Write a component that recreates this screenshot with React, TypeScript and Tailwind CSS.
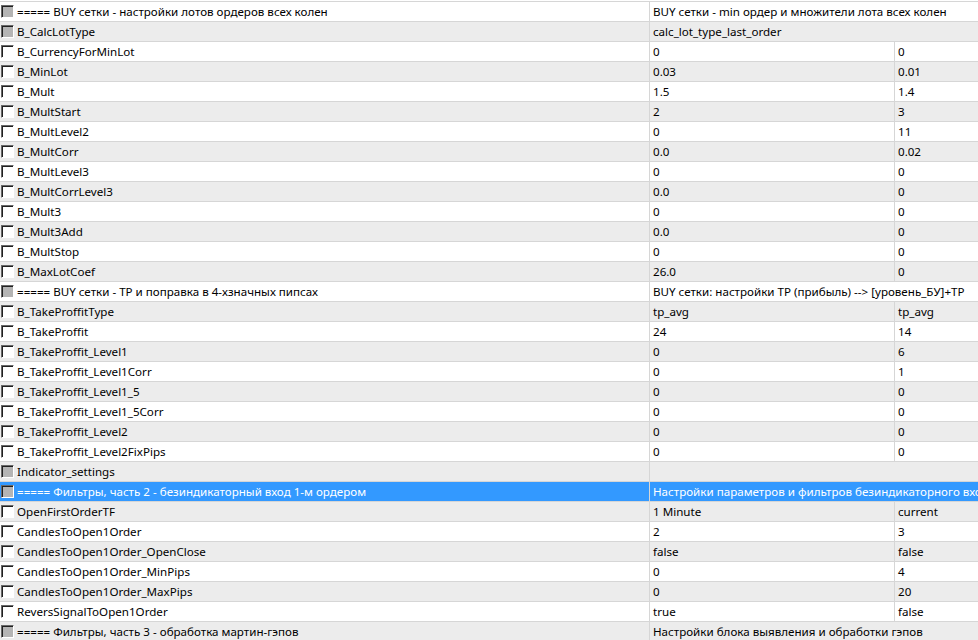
import React from 'react';

type Row = {
  name: string;
  v1?: string;
  v2?: string;
  span?: boolean;
  group?: boolean;
  selected?: boolean;
};

const ROWS: Row[] = [
  { name: '===== BUY сетки - настройки лотов ордеров всех колен', v1: 'BUY сетки - min ордер и множители лота всех колен', span: true, group: true },
  { name: 'B_CalcLotType', v1: 'calc_lot_type_last_order', span: true, group: true },
  { name: 'B_CurrencyForMinLot', v1: '0', v2: '0' },
  { name: 'B_MinLot', v1: '0.03', v2: '0.01' },
  { name: 'B_Mult', v1: '1.5', v2: '1.4' },
  { name: 'B_MultStart', v1: '2', v2: '3' },
  { name: 'B_MultLevel2', v1: '0', v2: '11' },
  { name: 'B_MultCorr', v1: '0.0', v2: '0.02' },
  { name: 'B_MultLevel3', v1: '0', v2: '0' },
  { name: 'B_MultCorrLevel3', v1: '0.0', v2: '0' },
  { name: 'B_Mult3', v1: '0', v2: '0' },
  { name: 'B_Mult3Add', v1: '0.0', v2: '0' },
  { name: 'B_MultStop', v1: '0', v2: '0' },
  { name: 'B_MaxLotCoef', v1: '26.0', v2: '0' },
  { name: '===== BUY сетки - TP и поправка в 4-хзначных пипсах', v1: 'BUY сетки: настройки TP (прибыль) --> [уровень_БУ]+TP', span: true, group: true },
  { name: 'B_TakeProffitType', v1: 'tp_avg', v2: 'tp_avg' },
  { name: 'B_TakeProffit', v1: '24', v2: '14' },
  { name: 'B_TakeProffit_Level1', v1: '0', v2: '6' },
  { name: 'B_TakeProffit_Level1Corr', v1: '0', v2: '1' },
  { name: 'B_TakeProffit_Level1_5', v1: '0', v2: '0' },
  { name: 'B_TakeProffit_Level1_5Corr', v1: '0', v2: '0' },
  { name: 'B_TakeProffit_Level2', v1: '0', v2: '0' },
  { name: 'B_TakeProffit_Level2FixPips', v1: '0', v2: '0' },
  { name: 'Indicator_settings', v1: '', span: true, group: true },
  { name: '===== Фильтры, часть 2 - безиндикаторный вход 1-м ордером', v1: 'Настройки параметров и фильтров безиндикаторного входа', span: true, group: true, selected: true },
  { name: 'OpenFirstOrderTF', v1: '1 Minute', v2: 'current' },
  { name: 'CandlesToOpen1Order', v1: '2', v2: '3' },
  { name: 'CandlesToOpen1Order_OpenClose', v1: 'false', v2: 'false' },
  { name: 'CandlesToOpen1Order_MinPips', v1: '0', v2: '4' },
  { name: 'CandlesToOpen1Order_MaxPips', v1: '0', v2: '20' },
  { name: 'ReversSignalToOpen1Order', v1: 'true', v2: 'false' },
  { name: '===== Фильтры, часть 3 - обработка мартин-гэпов', v1: 'Настройки блока выявления и обработки гэпов', span: true, group: true },
];

function CheckBox({ filled }: { filled?: boolean }) {
  return (
    <div
      className={`w-[13px] h-[13px] shrink-0 border-t border-l border-t-[#696969] border-l-[#696969] border-b border-r border-b-white border-r-white ${
        filled ? 'bg-[#b4b4b4]' : 'bg-white'
      }`}
    >
      <div className="w-full h-full border-t border-l border-t-[#202020] border-l-[#202020]" />
    </div>
  );
}

export default function App() {
  return (
    <div
      className="w-[978px] h-[640px] overflow-hidden bg-white pt-[1px] text-[11.6px] text-black"
      style={{ fontFamily: '"Noto Sans", "Open Sans", sans-serif' }}
    >
      {ROWS.map((r, i) => {
        const bg = r.selected ? 'bg-[#3399ff] text-white' : i % 2 === 1 ? 'bg-[#ececec]' : 'bg-white';
        return (
          <div key={i} className={`grid grid-cols-[649px_245px_1fr] h-[20px] border-t border-[#d6d6d6] ${bg}`}>
            <div className="flex items-center gap-[3px] pl-[1px] whitespace-nowrap overflow-hidden leading-none">
              <CheckBox filled={r.group} />
              <span className="mt-[1px]">{r.name}</span>
            </div>
            {r.span ? (
              <div className="col-span-2 flex items-center pl-[3px] border-l border-[#d6d6d6] whitespace-nowrap overflow-hidden leading-none">
                <span className="mt-[1px]">{r.v1}</span>
              </div>
            ) : (
              <>
                <div className="flex items-center pl-[3px] border-l border-[#d6d6d6] whitespace-nowrap overflow-hidden leading-none">
                  <span className="mt-[1px]">{r.v1}</span>
                </div>
                <div className="flex items-center pl-[3px] border-l border-[#d6d6d6] whitespace-nowrap overflow-hidden leading-none">
                  <span className="mt-[1px]">{r.v2}</span>
                </div>
              </>
            )}
          </div>
        );
      })}
    </div>
  );
}
